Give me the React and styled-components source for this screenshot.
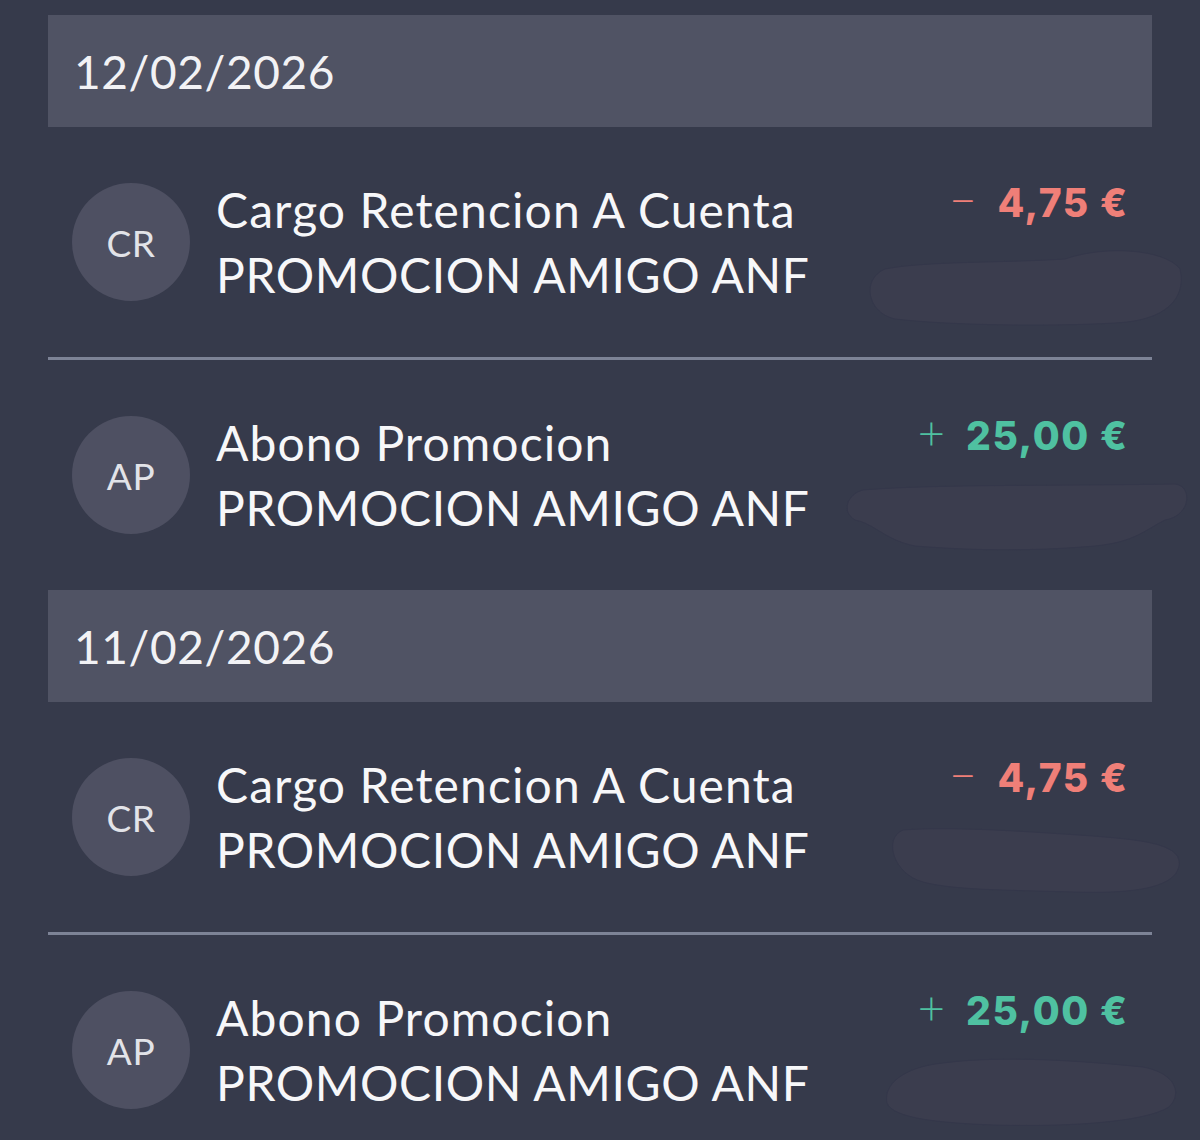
import React from "react";
import styled, { createGlobalStyle } from "styled-components";

const Global = createGlobalStyle`
  html, body { margin: 0; padding: 0; background: #363a4b; }
  body { font-family: Lato, "Open Sans", sans-serif; }
`;

const Page = styled.div`
  background: #363a4b;
  padding: 15px 48px 0;
  min-height: 1140px;
  box-sizing: border-box;
  overflow: hidden;
`;

const DateBar = styled.div`
  height: 112px;
  background: #505364;
  display: flex;
  align-items: center;
  padding-left: 26px;
  color: #f2f2f5;
  font-size: 46px;
  font-weight: 400;
  letter-spacing: 0.6px;
`;

const Row = styled.div`
  height: 230px;
  display: flex;
  align-items: center;
  padding: 0 25px 0 24px;
`;

const Avatar = styled.div`
  width: 118px;
  height: 118px;
  border-radius: 50%;
  background: #4e5062;
  color: #e2e3e8;
  display: flex;
  align-items: center;
  justify-content: center;
  font-size: 37px;
  letter-spacing: 0.5px;
  flex-shrink: 0;
`;

const TextBlock = styled.div`
  margin-left: 26px;
  display: flex;
  flex-direction: column;
  color: #f7f7f9;
  font-size: 48px;
  line-height: 65px;
  white-space: nowrap;
`;

const Line = styled.div`
  letter-spacing: ${(p) => p.$ls}px;
`;

const RightCol = styled.div`
  margin-left: auto;
  align-self: flex-start;
  margin-top: 49px;
  display: flex;
  flex-direction: column;
  align-items: flex-end;
`;

const Amount = styled.div`
  display: flex;
  align-items: baseline;
  font-family: Inter, Lato, sans-serif;
  font-size: 39px;
  line-height: 48px;
  font-weight: 800;
  letter-spacing: 1.6px;
  margin-right: -1.6px;
  color: ${(p) => (p.$positive ? "#4fc1a1" : "#ef7f78")};
  white-space: nowrap;
`;

const Sign = styled.span`
  font-family: Lato, sans-serif;
  font-weight: 300;
  font-size: 47px;
  line-height: 1;
  letter-spacing: 0;
  margin-right: 21px;
`;

const Redaction = styled.svg`
  display: block;
  margin-right: ${(p) => p.$mr}px;
  margin-top: ${(p) => p.$mt}px;
  overflow: visible;
`;

const Divider = styled.div`
  height: 3px;
  background: #7d8396;
`;

const blobs = [
  { w: 320, h: 86, mr: -58, mt: 12, d: "M20 30 C60 22 140 24 200 20 C240 6 300 10 315 30 C322 60 300 82 250 84 C180 88 80 86 30 80 C2 74 -4 40 20 30 Z" },
  { w: 345, h: 72, mr: -63, mt: 20, d: "M18 10 C90 4 220 6 330 4 C348 6 346 36 320 40 C300 50 290 62 250 66 C180 72 120 70 70 66 C40 60 30 44 10 40 C-4 32 2 14 18 10 Z" },
  { w: 300, h: 80, mr: -56, mt: 14, d: "M20 14 C70 10 150 16 210 20 C260 24 300 28 296 50 C292 72 250 78 190 76 C120 74 70 74 40 66 C10 58 0 22 20 14 Z" },
  { w: 300, h: 80, mr: -56, mt: 14, d: "M60 14 C120 6 200 12 260 18 C292 24 300 44 286 58 C260 74 180 78 110 76 C60 74 10 70 4 54 C0 36 20 18 60 14 Z" },
];

const groups = [
  {
    date: "12/02/2026",
    items: [
      { ini: "CR", title: "Cargo Retencion A Cuenta", sub: "PROMOCION AMIGO ANF", sign: "−", amt: "4,75 €", pos: false, b: 0 },
      { ini: "AP", title: "Abono Promocion", sub: "PROMOCION AMIGO ANF", sign: "+", amt: "25,00 €", pos: true, b: 1 },
    ],
  },
  {
    date: "11/02/2026",
    items: [
      { ini: "CR", title: "Cargo Retencion A Cuenta", sub: "PROMOCION AMIGO ANF", sign: "−", amt: "4,75 €", pos: false, b: 2 },
      { ini: "AP", title: "Abono Promocion", sub: "PROMOCION AMIGO ANF", sign: "+", amt: "25,00 €", pos: true, b: 3 },
    ],
  },
];

function Movement({ it }) {
  const bl = blobs[it.b];
  return (
    <Row>
      <Avatar>{it.ini}</Avatar>
      <TextBlock>
        <Line $ls={1.1}>{it.title}</Line>
        <Line $ls={0.6}>{it.sub}</Line>
      </TextBlock>
      <RightCol>
        <Amount $positive={it.pos}>
          <Sign>{it.sign}</Sign>
          {it.amt}
        </Amount>
        <Redaction width={bl.w} height={bl.h} $mr={bl.mr} $mt={bl.mt} viewBox={`0 0 ${bl.w} ${bl.h}`}>
          <path d={bl.d} fill="#3b3d4e" stroke="#34374a" strokeWidth="1" />
        </Redaction>
      </RightCol>
    </Row>
  );
}

export default function App() {
  return (
    <>
      <Global />
      <Page>
        {groups.map((g) => (
          <section key={g.date}>
            <DateBar>{g.date}</DateBar>
            {g.items.map((it, i) => (
              <React.Fragment key={i}>
                {i > 0 && <Divider />}
                <Movement it={it} />
              </React.Fragment>
            ))}
          </section>
        ))}
      </Page>
    </>
  );
}
